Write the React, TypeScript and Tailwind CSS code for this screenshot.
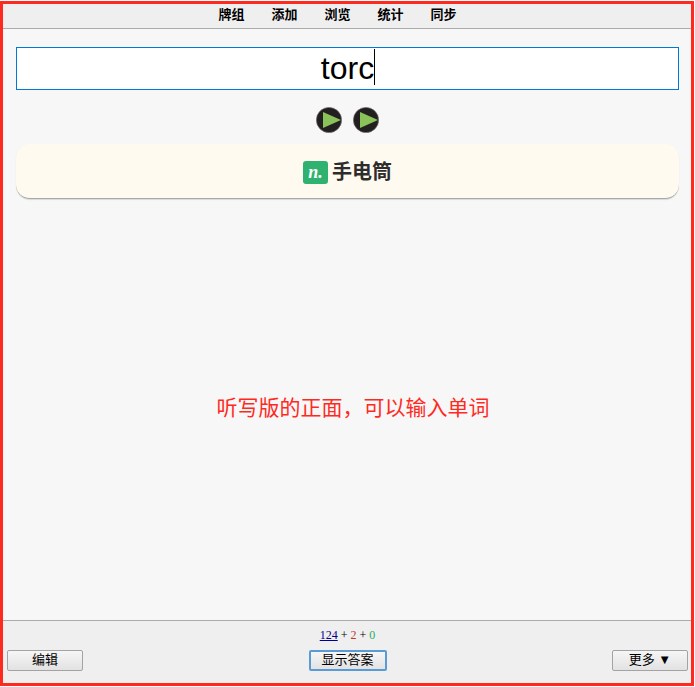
import React from "react";

const cjk = "font-['Liberation_Sans','Noto_Sans_CJK_SC',sans-serif]";

function Play() {
  return (
    <svg width="26" height="26" viewBox="0 0 26 26">
      <circle cx="13" cy="13" r="12.6" fill="#231f20" stroke="#6b6b6b" strokeWidth="0.6" />
      <path d="M7 5 L25 13 L7 21 Z" fill="#8bc15a" />
    </svg>
  );
}

function Btn({ children, className }: { children: React.ReactNode; className: string }) {
  return (
    <div
      className={`flex h-[21px] items-center justify-center rounded-[2px] bg-gradient-to-b from-[#f6f6f6] to-[#e2e2e2] pb-px text-[13px] text-black ${className}`}
    >
      {children}
    </div>
  );
}

export default function App() {
  return (
    <div className={`h-[687px] w-[695px] bg-white pt-px ${cjk}`}>
      <div className="flex h-[685px] w-[694px] flex-col border-[3px] border-[#ff2a1f] bg-[#f7f7f7]">
        <nav className="flex h-[25px] shrink-0 items-center justify-center gap-[27px] border-b border-[#ababab] bg-[#efefef] pb-[2px] pr-[19px] text-[13px] font-bold text-black">
          <span>牌组</span>
          <span>添加</span>
          <span>浏览</span>
          <span>统计</span>
          <span>同步</span>
        </nav>

        <main className="flex min-h-0 flex-1 flex-col px-[13px] pt-[18px]">
          <div className="relative flex h-[43px] w-[663px] shrink-0 items-center justify-center border border-[#0078d7] bg-white pb-[2px] text-[32px] text-black">
            <span className="relative">
              torc
              <span className="absolute right-[-1px] top-[5px] h-[36px] w-px bg-black" />
            </span>
          </div>

          <div className="mt-[17px] flex shrink-0 justify-center gap-[11px] pl-[1px]">
            <Play />
            <Play />
          </div>

          <div className="mt-[11px] flex h-[55px] w-[663px] shrink-0 items-center justify-center gap-[4px] rounded-[14px] border-b border-[#a8a8a8] bg-[#fffaf0] pt-[2px] shadow-[0_1px_1px_rgba(0,0,0,0.12)]">
            <span className="flex h-[23px] w-[25px] items-center justify-center rounded-[3px] bg-[#2fb26f] font-['Liberation_Serif',serif] text-[18px] font-bold italic leading-none text-white">
              n.
            </span>
            <span className="text-[20px] font-bold text-[#2d2d2d]">手电筒</span>
          </div>

          <div className="flex flex-1 items-center justify-center pb-[4px] pl-[12px] text-[21px] text-[#ff2a1f]">
            听写版的正面，可以输入单词
          </div>
        </main>

        <footer className="flex h-[63px] shrink-0 flex-col border-t border-[#ababab] bg-[#efefef] pl-[4px] pr-[3px]">
          <div className="mt-[7px] text-center font-['Liberation_Serif','Noto_Sans_CJK_SC',serif] text-[12px] leading-[14px] text-black">
            <span className="text-[#00008b] underline">124</span>
            <span> + </span>
            <span className="text-[#c0392b]">2</span>
            <span> + </span>
            <span className="text-[#27ae60]">0</span>
          </div>
          <div className="mt-[8px] flex items-center justify-between">
            <Btn className="w-[76px] border border-[#a3a3a3]">编辑</Btn>
            <Btn className="w-[78px] border-2 border-[#5b9bd5]">显示答案</Btn>
            <Btn className="w-[76px] border border-[#a3a3a3]">更多 ▼</Btn>
          </div>
        </footer>
      </div>
    </div>
  );
}
